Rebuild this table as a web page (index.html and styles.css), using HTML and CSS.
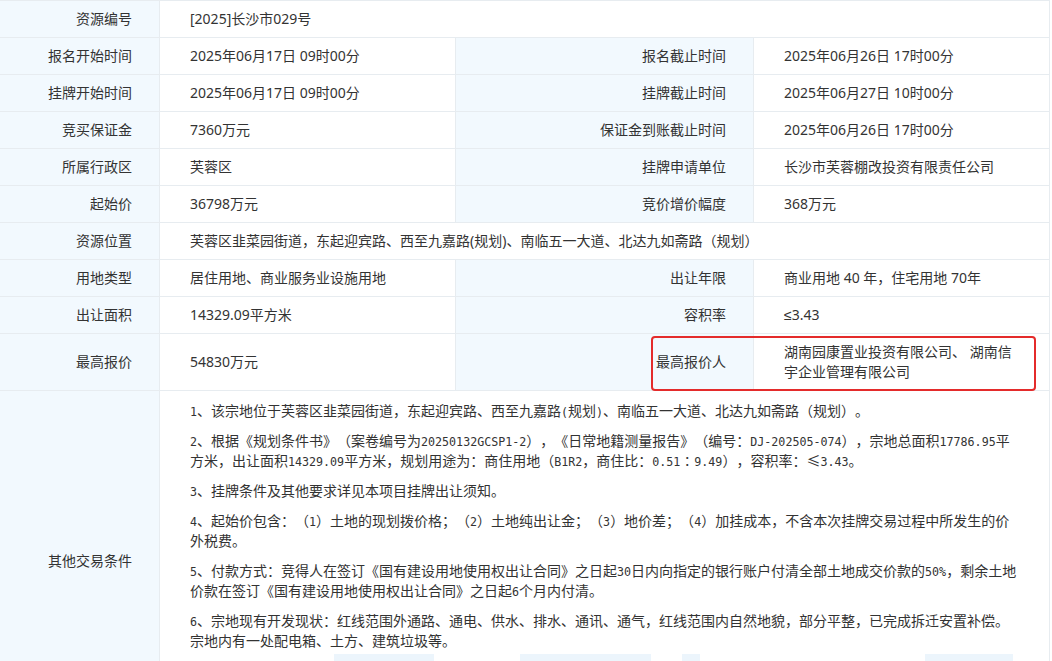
FILE: index.html
```html
<!DOCTYPE html>
<html lang="zh-CN">
<head>
<meta charset="utf-8">
<title>资源详情</title>
<link rel="stylesheet" href="styles.css">
</head>
<body>
<div class="sheet">
  <div class="lbl">资源编号</div>
  <div class="val span3">[2025]长沙市029号</div>

  <div class="lbl">报名开始时间</div>
  <div class="val">2025年06月17日 09时00分</div>
  <div class="lbl">报名截止时间</div>
  <div class="val">2025年06月26日 17时00分</div>

  <div class="lbl">挂牌开始时间</div>
  <div class="val">2025年06月17日 09时00分</div>
  <div class="lbl">挂牌截止时间</div>
  <div class="val">2025年06月27日 10时00分</div>

  <div class="lbl">竞买保证金</div>
  <div class="val">7360万元</div>
  <div class="lbl">保证金到账截止时间</div>
  <div class="val">2025年06月26日 17时00分</div>

  <div class="lbl">所属行政区</div>
  <div class="val">芙蓉区</div>
  <div class="lbl">挂牌申请单位</div>
  <div class="val">长沙市芙蓉棚改投资有限责任公司</div>

  <div class="lbl">起始价</div>
  <div class="val">36798万元</div>
  <div class="lbl">竞价增价幅度</div>
  <div class="val">368万元</div>

  <div class="lbl">资源位置</div>
  <div class="val span3">芙蓉区韭菜园街道，东起迎宾路、西至九嘉路(规划)、南临五一大道、北达九如斋路（规划）</div>

  <div class="lbl">用地类型</div>
  <div class="val">居住用地、商业服务业设施用地</div>
  <div class="lbl">出让年限</div>
  <div class="val">商业用地 40 年，住宅用地 70年</div>

  <div class="lbl">出让面积</div>
  <div class="val">14329.09平方米</div>
  <div class="lbl">容积率</div>
  <div class="val">≤3.43</div>

  <div class="lbl">最高报价</div>
  <div class="val">54830万元</div>
  <div class="lbl">最高报价人</div>
  <div class="val multi">湖南园康置业投资有限公司、 湖南信宇企业管理有限公司</div>

  <div class="lbl">其他交易条件</div>
  <div class="val span3 terms">
    <p><span class="lat">1</span>、该宗地位于芙蓉区韭菜园街道，东起迎宾路、西至九嘉路<span class="lat">(</span>规划<span class="lat">)</span>、南临五一大道、北达九如斋路（规划）。</p>
    <p><span class="lat">2</span>、根据《规划条件书》（案卷编号为<span class="lat">20250132GCSP1-2</span>），《日常地籍测量报告》（编号：<span class="lat">DJ-202505-074</span>），宗地总面积<span class="lat">17786.95</span>平方米，出让面积<span class="lat">14329.09</span>平方米，规划用途为：商住用地（<span class="lat">B1R2</span>，商住比：<span class="lat">0.51</span>∶<span class="lat">9.49</span>），容积率：≤<span class="lat">3.43</span>。</p>
    <p><span class="lat">3</span>、挂牌条件及其他要求详见本项目挂牌出让须知。</p>
    <p><span class="lat">4</span>、起始价包含：（<span class="lat">1</span>）土地的现划拨价格；（<span class="lat">2</span>）土地纯出让金；（<span class="lat">3</span>）地价差；（<span class="lat">4</span>）加挂成本，不含本次挂牌交易过程中所发生的价外税费。</p>
    <p><span class="lat">5</span>、付款方式：竞得人在签订《国有建设用地使用权出让合同》之日起<span class="lat">30</span>日内向指定的银行账户付清全部土地成交价款的<span class="lat">50%</span>，剩余土地价款在签订《国有建设用地使用权出让合同》之日起<span class="lat">6</span>个月内付清。</p>
    <p><span class="lat">6</span>、宗地现有开发现状：红线范围外通路、通电、供水、排水、通讯、通气，红线范围内自然地貌，部分平整，已完成拆迁安置补偿。宗地内有一处配电箱、土方、建筑垃圾等。</p>
    <div class="attach">
      <span class="blob b1"></span>
      <span class="blob b2"></span>
      <span class="blob b3"></span>
      <span class="blob b4"></span>
    </div>
  </div>

  <div class="highlight"></div>
</div>
</body>
</html>
```

FILE: styles.css
```css
html, body {
  margin: 0;
  padding: 0;
  background: #ffffff;
}

body {
  font-family: "Noto Sans", "Liberation Sans", "Noto Sans CJK SC", sans-serif;
  font-size: 14px;
  color: #333333;
  text-spacing-trim: space-all;
}

.sheet {
  position: relative;
  width: 1050px;
  box-sizing: border-box;
  display: grid;
  grid-template-columns: 159px 295px 297px 295px;
  grid-template-rows: repeat(9, 36px) 56px auto;
  gap: 1px;
  background: #e7ecf0;
  border-top: 1px solid #e7ecf0;
  border-right: 1px solid #e7ecf0;
}

.lbl {
  display: flex;
  align-items: center;
  justify-content: flex-end;
  padding-right: 27px;
  background: #f2f9fe;
  line-height: 20px;
  white-space: nowrap;
}

.val {
  display: flex;
  align-items: center;
  padding: 0 30px 0 30px;
  background: #ffffff;
  line-height: 20px;
}

.span3 {
  grid-column: span 3;
}

.multi {
  display: block;
  padding-top: 8px;
}

.terms {
  display: block;
  padding: 9px 29px 60px 30px;
  font-family: "Noto Sans CJK SC", sans-serif;
  color: #333333;
}

.terms p {
  margin: 0 0 10px 0;
  line-height: 20px;
}

.terms p:last-of-type {
  margin-bottom: 0;
}

.lat {
  font-family: "DejaVu Sans Mono", monospace;
  font-size: 11.67px;
  line-height: 0;
}

.attach {
  display: flex;
  height: 16px;
  margin-top: 4px;
}

.blob {
  display: block;
  height: 16px;
  background: #ecf5fc;
}

.b1 { margin-left: 144px; width: 100px; }
.b2 { margin-left: 86px; width: 131px; }
.b3 { margin-left: 31px; width: 18px; }
.b4 { margin-left: 225px; width: 88px; }

.highlight {
  position: absolute;
  left: 651px;
  top: 335px;
  width: 385px;
  height: 55px;
  box-sizing: border-box;
  border: 2px solid #e42b2b;
  border-radius: 4px;
  pointer-events: none;
}
```
